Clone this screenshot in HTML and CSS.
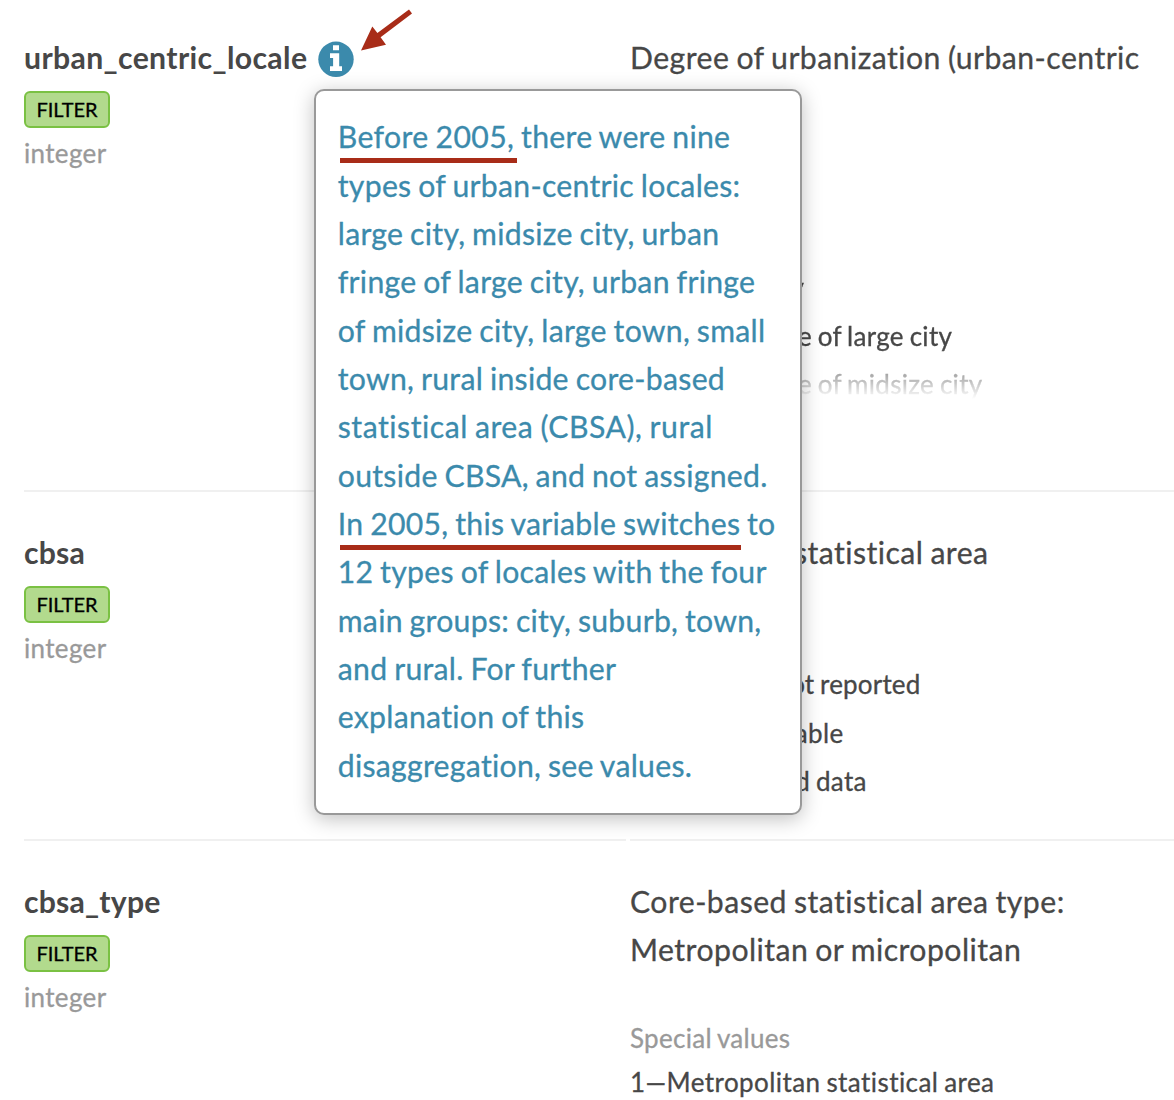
FILE: index.html
```html
<!DOCTYPE html>
<html lang="en">
<head>
<meta charset="utf-8">
<title>Variables</title>
<link rel="stylesheet" href="styles.css">
</head>
<body>
<main class="codebook">
  <section class="row row-first">
    <div class="cell">
      <div class="name"><span class="long-name">urban_centric_locale</span>
        <span class="info">
          <svg class="info-icon" viewBox="0 0 36 36" width="36" height="36"><circle cx="18" cy="18.300" r="17.700" fill="#3b8aac"/><path fill="#fff" d="M15 4.300h6v4.900h-6zM12 12.300h9.200v13h2.800V30H12v-4.700h3.100v-8.300H12z"/></svg>
          <svg class="arrow" viewBox="0 0 54 44" width="54" height="44"><path fill="#a82c18" d="M0 41.500L11.300 17.600L16.400 24.100L48 .500L51 4.500L19.600 28.200L25 35.800z"/></svg>
          <span class="popup"><span class="marked marked-short">Before 2005,</span> there were nine<br>types of urban-centric locales:<br>large city, midsize city, urban<br>fringe of large city, urban fringe<br>of midsize city, large town, small<br>town, rural inside core-based<br><span class="loose">statistical area (CBSA), rural</span><br>outside CBSA, and not assigned.<br><span class="marked">In 2005, this variable switches</span> to<br>12 types of locales with the four<br>main groups: city, suburb, town,<br>and rural. For further<br>explanation of this<br>disaggregation, see values.</span>
        </span>
      </div>
      <span class="filter">FILTER</span>
      <div class="type">integer</div>
    </div>
    <div class="cell">
      <p class="description">Degree of urbanization (urban-centric<br>locale)</p>
      <h3 class="values-title">Special values</h3>
      <ul class="values faded">
        <li>1—Large city</li>
        <li>2—Midsize city</li>
        <li>3—Urban fringe of large city</li>
        <li>4—Urban fringe of midsize city</li>
      </ul>
    </div>
  </section>
  <section class="row">
    <div class="cell">
      <div class="name">cbsa</div>
      <span class="filter">FILTER</span>
      <div class="type">integer</div>
    </div>
    <div class="cell">
      <p class="description">Core-based statistical area</p>
      <h3 class="values-title">Special values</h3>
      <ul class="values">
        <li class="tight">-1—Missing/not reported</li>
        <li>-2—Not applicable</li>
        <li>-3—Suppressed data</li>
      </ul>
    </div>
  </section>
  <section class="row row-last">
    <div class="cell">
      <div class="name">cbsa_type</div>
      <span class="filter">FILTER</span>
      <div class="type">integer</div>
    </div>
    <div class="cell">
      <p class="description">Core-based statistical area type:<br>Metropolitan or micropolitan</p>
      <h3 class="values-title">Special values</h3>
      <ul class="values">
        <li class="loose">1—Metropolitan statistical area</li>
      </ul>
    </div>
  </section>
</main>
</body>
</html>
```
FILE: styles.css
```css
* { box-sizing: border-box; }
body {
  margin: 0;
  height: 1100px;
  overflow: hidden;
  background: #fff;
  color: #474747;
  font: 30.2px/48.4px Lato, "Liberation Sans", sans-serif;
  font-variant-ligatures: none;
  letter-spacing: .28px;
  word-spacing: -1.2px;
  -webkit-text-stroke: .3px currentColor;
}
.codebook { padding-left: 24px; }
.row {
  display: grid;
  grid-template-columns: 602px 1fr;
  column-gap: 4px;
  height: 349px;
}
.row-first { height: 492px; }
.row-last { height: 259px; overflow: hidden; }
.cell { padding-top: 36px; border-bottom: 2px solid #f0f0f0; white-space: nowrap; }
.row-first .cell { padding-top: 33px; }
.row-last .cell { border-bottom: 0; }
.name { height: 48.4px; font-weight: 700; letter-spacing: .2px; -webkit-text-stroke: 0; }
.long-name { letter-spacing: .36px; }
.info { position: relative; display: inline-block; width: 36px; height: 36px; margin-left: 4px; vertical-align: top; margin-top: 8px; }
.info-icon { display: block; }
.arrow { position: absolute; left: 43px; top: -32px; }
.popup {
  position: absolute;
  z-index: 2;
  left: -4px;
  top: 48px;
  width: 488px;
  height: 726px;
  padding: 21.3px 22px;
  border: 2px solid #999;
  border-radius: 10px;
  background: #fff;
  box-shadow: 0 4px 20px rgba(0, 0, 0, .25);
  color: #3b8aac;
  font-weight: 400;
  line-height: 48.35px;
  letter-spacing: .28px;
  -webkit-text-stroke: .3px currentColor;
}
.marked { position: relative; }
.marked::after {
  content: "";
  position: absolute;
  left: 2px;
  right: -1px;
  bottom: -9px;
  height: 5px;
  background: #a82c18;
}
.marked-short { letter-spacing: .38px; }
.marked-short::after { right: -3px; }
.loose { letter-spacing: .52px; }
.filter {
  display: block;
  width: 86px;
  height: 37px;
  margin-top: 10px;
  border: 2px solid #7ac143;
  border-radius: 6px;
  background: #b2da8d;
  color: #000;
  font-size: 20px;
  line-height: 32px;
  letter-spacing: 0;
  text-align: center;
}
.type { margin-top: 3px; font-size: 26px; line-height: 44px; letter-spacing: .35px; color: #999; }
.description { margin: 0 0 40px; letter-spacing: .46px; }
.values-title { margin: 0; font-size: 26px; font-weight: 400; line-height: 48px; color: #999; }
.values { margin: -4px 0 0; padding: 0; list-style: none; font-size: 26px; line-height: 48.4px; letter-spacing: .3px; }
.values .loose { letter-spacing: .43px; }
.values .tight { letter-spacing: .19px; }
.faded {
  margin-top: -3px;
  height: 184px;
  overflow: hidden;
  -webkit-mask-image: linear-gradient(#000 72%, transparent 100%);
  mask-image: linear-gradient(#000 72%, transparent 100%);
}
```
